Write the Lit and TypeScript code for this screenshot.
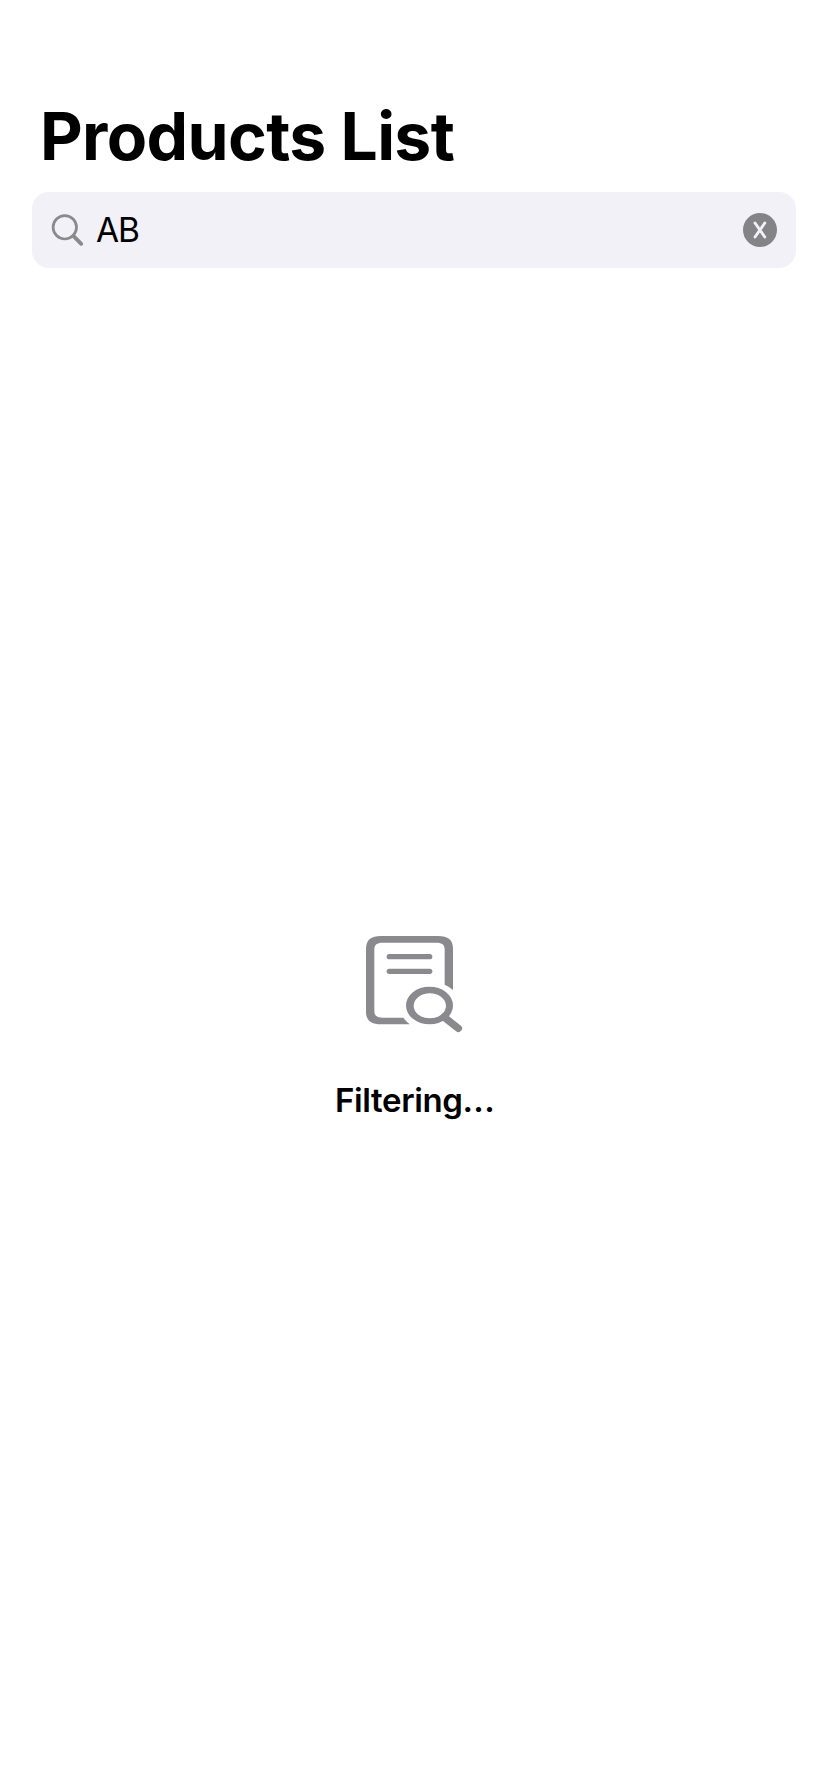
import { LitElement, html, css } from "lit";
import { customElement, state } from "lit/decorators.js";

@customElement("search-field")
class SearchField extends LitElement {
  static properties = { value: { type: String } };
  declare value: string;

  static styles = css`
    :host {
      display: flex;
      align-items: center;
      box-sizing: border-box;
      height: 76px;
      margin: 0 32px;
      padding: 0 18px;
      border-radius: 17px;
      background: #f2f1f7;
    }
    svg {
      display: block;
      flex: none;
    }
    .text {
      flex: 1;
      margin-left: 10px;
      font-size: 33.5px;
      line-height: 40px;
      letter-spacing: -1.2px;
      color: #000;
    }
  `;

  render() {
    return html`
      <svg width="36" height="36" viewBox="0 0 36 36" fill="none" stroke="#8a898e">
        <circle cx="14.8" cy="15.3" r="11.7" stroke-width="2.7" />
        <path d="M23.6 24.2 31.2 31.8" stroke-width="3.9" stroke-linecap="round" />
      </svg>
      <div class="text">${this.value}</div>
      <svg width="36" height="36" viewBox="0 0 36 36">
        <circle cx="18" cy="18" r="17" fill="#848388" />
        <path d="M13 11 22.800 25M22.800 11 13 25" fill="none" stroke="#f2f1f7" stroke-width="2.9" stroke-linecap="round" />
      </svg>
    `;
  }
}

@customElement("app-root")
class AppRoot extends LitElement {
  @state() private query = "AB";

  static styles = css`
    :host {
      display: block;
      box-sizing: border-box;
      height: 1792px;
      padding-top: 96px;
      background: #fff;
      color: #000;
      font-family: Inter, "Liberation Sans", sans-serif;
    }
    .title {
      margin: 0 0 16px;
      padding-left: 40px;
      font-size: 66px;
      line-height: 80px;
      font-weight: 700;
      letter-spacing: -0.65px;
      white-space: nowrap;
    }
    .empty {
      display: flex;
      flex-direction: column;
      align-items: center;
      margin-top: 652px;
    }
    .status {
      margin-top: 40px;
      padding-left: 2px;
      font-size: 33px;
      line-height: 40px;
      font-weight: 600;
      letter-spacing: -0.38px;
    }
    .dots {
      letter-spacing: 0.3px;
    }
    svg {
      display: block;
    }
  `;

  render() {
    return html`
      <h1 class="title">Products List</h1>
      <search-field .value=${this.query}></search-field>
      <div class="empty">
        <svg width="128" height="120" viewBox="0 0 384 360">
          <g fill="#8a898e">
            <path d="M309 210V86C309 60 294 48 264 48H93C63 48 48 60 48 86V275C48 301 63 313 93 313H179Q168 304 160 293H97C81 293 73 287 73 273V88C73 74 81 68 97 68H260C276 68 284 74 284 88V194Q298 200 309 210Z" />
            <rect x="110" y="102" width="137" height="16" rx="8" />
            <rect x="110" y="146" width="137" height="16" rx="8" />
            <path fill-rule="evenodd" d="M168 256.500a70.500 56.500 0 1 0 141 0a70.500 56.500 0 1 0-141 0ZM191 257.500a48.500 37.500 0 1 1 97 0a48.500 37.500 0 1 1-97 0Z" />
          </g>
          <path d="M282 291 325 325" fill="none" stroke="#8a898e" stroke-width="22" stroke-linecap="round" />
        </svg>
        <div class="status">Filtering<span class="dots">...</span></div>
      </div>
    `;
  }
}
